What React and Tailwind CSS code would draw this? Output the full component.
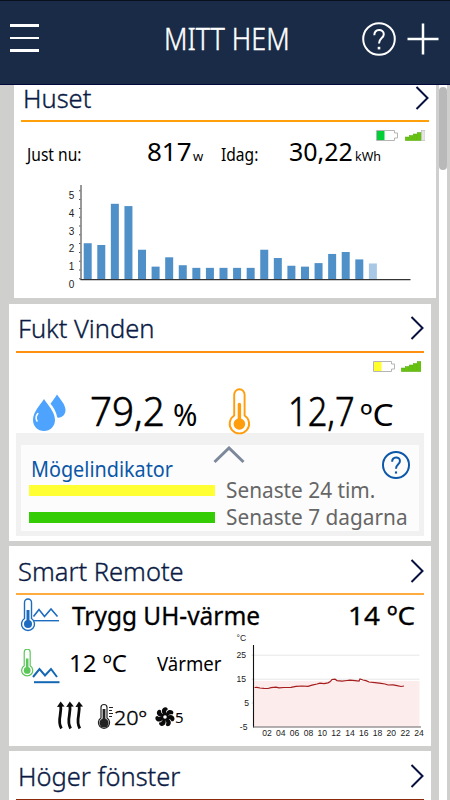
import { clsx } from "clsx";

const FONT = "font-['Noto_Sans','Open_Sans',sans-serif]";

// kWh per hour, the last one is still running
const HOURS = [2.05, 1.95, 4.29, 4.16, 1.68, 0.72, 1.25, 0.8, 0.65, 0.65, 0.65, 0.65, 0.65, 1.68, 1.21, 0.77, 0.72, 0.92, 1.44, 1.55, 1.13, 0.9];

const TEMP_LINE =
  "254.5,687.5 257,687.3 260,688 264,688.3 268,688.5 271,687.6 276,687.2 279,687.9 284,687.5 291,687.3 296,686.4 302,686 308,686.3 312,685.2 317,684 320,683.2 324,683.6 328,682.9 330,681.8 332,679.5 335,679.2 337,680.6 342,681.2 347,680.5 350,680.1 355,680.6 359,681 360,679 363,680 366,680.6 369,682 375,682.7 381,683.4 385,684 388,685 393,684.9 397,685.6 401,686.5 404,686";

function Chevron() {
  return (
    <svg viewBox="0 0 14 24" className="h-6 w-3.5 shrink-0" fill="none" stroke="#07103f" strokeWidth="2">
      <path d="M1.5 1 L12.5 12 L1.5 23" />
    </svg>
  );
}

function Help({ className, thin }) {
  return (
    <svg viewBox="0 0 34 34" className={clsx("shrink-0", className)} fill="none" stroke="currentColor" strokeWidth={thin ? 2 : 2.4}>
      <circle cx="17" cy="17" r="15.8" />
      <path d="M12.3 13.2 C12.3 6.2 21.8 6.4 21.8 12.2 C21.8 16.2 17 16 17 21.5" />
      <path d="M17 24.8 V27.4" strokeWidth="2.6" />
    </svg>
  );
}

function Battery({ color }) {
  return (
    <svg viewBox="0 0 22 11" className="h-[11px] w-[22px] shrink-0">
      <path d="M.5 .5 H18.5 V3 H21.5 V8 H18.5 V10.5 H.5 Z" fill="#fff" stroke="#b5b5b5" />
      <rect x="1" y="1" width="7.5" height="9" fill={color} />
    </svg>
  );
}

function Signal({ level }) {
  return (
    <svg viewBox="0 0 20 11" className="h-[11px] w-5 shrink-0">
      {[4, 5.5, 7, 8.5, 10.5].map((h, i) => (
        <rect key={h} x={i * 4 + 0.3} y={11 - h} width="3.8" height={h - 0.4} fill={i < level ? "#66c40b" : "#e4e4e4"} stroke={i < level ? "#5aa81a" : "#aaa"} strokeWidth=".5" />
      ))}
    </svg>
  );
}

function Card({ title, titleClass = "leading-[34px]", line, className, children }) {
  return (
    <section className={clsx("w-[422px] shrink-0 bg-white px-[7px]", className)}>
      <div className="flex items-center justify-between pl-0.5">
        <h2 className={clsx("text-[25.5px] whitespace-nowrap text-[#0b1b45] font-[350] [-webkit-text-stroke:0.35px]", titleClass)}>{title}</h2>
        <Chevron />
      </div>
      <div className={line} />
      {children}
    </section>
  );
}

function PowerChart() {
  return (
    <svg viewBox="64 184 352 108" className="mt-[18px] ml-[43px] h-[108px] w-[352px]">
      {HOURS.map((v, i) => (
        <rect key={i} x={83.7 + i * 13.58} y={279.3 - v * 17.6} width="8" height={v * 17.6} fill={i === 21 ? "#a9c8e5" : "#4f90c9"} />
      ))}
      <path d="M81 185 V280" stroke="#555" strokeWidth="1.2" />
      <path d="M80.5 279.6 H410.5" stroke="#333" strokeWidth="1.2" />
      <path d="M79.7 279.3 V190" stroke="#444" strokeWidth="1.2" strokeDasharray="1 7.8" />
      <g className="font-['Liberation_Sans',sans-serif] text-[10px]" fill="#222" textAnchor="middle">
        {[5, 4, 3, 2, 1, 0].map((n, i) => (
          <text key={n} x="71.6" y={199 + i * 17.75}>{n}</text>
        ))}
      </g>
    </svg>
  );
}

function TempChart() {
  return (
    <svg viewBox="230 632 194 108" className="-mt-px h-[108px] w-[194px] shrink-0">
      <rect x="254" y="681" width="165.5" height="46" fill="#fdecec" />
      <path d="M254 655.2 H419.5 M254 679.2 H419.5" stroke="#e6e6e6" />
      <path d="M254 703 H251.5 M254 679.2 H251.5 M254 655.2 H251.5" stroke="#ddd" />
      <path d="M253.5 645 V727.5" stroke="#111" strokeWidth="1.1" />
      <path d="M253 727 H421" stroke="#666" />
      <polyline points={TEMP_LINE} fill="none" stroke="#a51d1d" strokeWidth="1.2" />
      <g className="font-['Liberation_Sans',sans-serif] text-[8.6px]" fill="#222">
        <text x="236.5" y="641">°C</text>
        <text x="246" y="658.3" textAnchor="end">25</text>
        <text x="246" y="682.3" textAnchor="end">15</text>
        <text x="249" y="706.2" textAnchor="end">5</text>
        <text x="247.5" y="730" textAnchor="end">-5</text>
        {["02", "04", "06", "08", "10", "12", "14", "16", "18", "20", "22", "24"].map((h, i) => (
          <text key={h} x={267 + i * 13.82} y="735.5" textAnchor="middle">{h}</text>
        ))}
      </g>
    </svg>
  );
}

function Drops() {
  return (
    <svg viewBox="32 393 35 38" className="h-[38px] w-[35px] shrink-0" fill="#4da3fd">
      <path d="M57 393.5 C60 398 65.5 403.5 65.5 409 C65.5 413.5 62 417.3 57.3 416.6 C56.3 411 53.5 406 50.5 402.8 C53 399.5 55.5 396 57 393.5 Z" />
      <path d="M44 398 C47.5 403.5 55 411 55 419 C55 425.5 50 430 44 430 C38 430 33 425.5 33 419 C33 411 40.5 403.5 44 398 Z" />
      <path d="M37.8 412.5 C35.8 415 35.8 418 37 420" fill="none" stroke="#fff" strokeWidth="1.6" strokeLinecap="round" />
    </svg>
  );
}

function Thermometer() {
  return (
    <svg viewBox="228 387 23 47" className="relative z-10 h-[47px] w-[23px] shrink-0" fill="none" stroke="#ff9d0c" strokeWidth="1.9">
      <path d="M234.2 414.5 V393.5 A5.2 5.2 0 0 1 244.6 393.5 V414.5 A9.7 9.7 0 1 1 234.2 414.5 Z" fill="#fff" />
      <path d="M239.4 403.5 V420" strokeWidth="3.4" strokeLinecap="round" />
      <circle cx="239.4" cy="423" r="5.8" fill="#ff9d0c" stroke="none" />
    </svg>
  );
}

// indoor = wave level with the bulb, outdoor = wave below it
function TempIcon({ low }) {
  const c = low ? "#5cc65a" : "#1d6cc0";
  return (
    <svg viewBox="20 598 41 38" className="h-[38px] w-[41px] shrink-0" fill="none">
      <g stroke={c} strokeWidth="1.4" transform={low ? "translate(3.4 89) scale(.85)" : undefined}>
        <path d="M24.5 618.5 V602.5 A3.5 3.5 0 0 1 31.5 602.5 V618.5 A6.5 6.5 0 1 1 24.5 618.5 Z" />
        <path d="M28 610 V622" strokeWidth="3" />
        <circle cx="28" cy="624" r="4" fill={c} stroke="none" />
      </g>
      {low ? (
        <g stroke="#1467b3">
          <path d="M33 626 L39.5 618 L45 624.5 L51 618 L57 626" strokeWidth="2" />
          <path d="M34 631.2 H59.5" strokeWidth="2" />
        </g>
      ) : (
        <g stroke="#1d6cc0" strokeWidth="1.6">
          <path d="M33.5 616.5 L39 609.5 L44.5 616.5 L51 609 L57.5 616.5" />
          <path d="M34 620.7 H59" strokeWidth="1.4" />
        </g>
      )}
    </svg>
  );
}

function HeatWaves() {
  return (
    <svg viewBox="56 700 28 30" className="h-[30px] w-7 shrink-0" fill="none" stroke="#0a0a0a" strokeWidth="2.8">
      {[0, 9.2, 18.4].map((x) => (
        <g key={x} transform={`translate(${x} 0)`}>
          <path d="M61.4 728.5 C56.5 720 62.4 714 60.6 705" />
          <path d="M57 707 L60.6 701.5 L64.6 706.5 Z" fill="#0a0a0a" stroke="none" />
        </g>
      ))}
    </svg>
  );
}

function SmallThermometer() {
  return (
    <svg viewBox="97 703 17 27" className="h-[27px] w-[17px] shrink-0" fill="none" stroke="#222" strokeWidth="1.2">
      <path d="M101 718 V707.5 A3 3 0 0 1 107 707.5 V718 A5.6 5.6 0 1 1 101 718 Z" />
      <path d="M104 709 V720" strokeWidth="2.8" />
      <circle cx="104" cy="723" r="4.6" fill="#222" stroke="none" />
      <path d="M109 707.5 H113 M109 710.5 H112 M109 713.5 H113 M109 716.5 H112" />
    </svg>
  );
}

function Fan() {
  return (
    <svg viewBox="0 0 20 20" className="h-5 w-5 shrink-0" fill="#0a0a0a">
      {[0, 51.4, 102.8, 154.3, 205.7, 257.1, 308.6].map((a) => (
        <path key={a} transform={`rotate(${a} 10 10)`} d="M8.6 7.6 C6 5.8 6.2 1.4 9.4 .4 C11.6 -.1 13 1.2 12.6 2.8 C10.8 3.8 10.8 5.4 11.2 7.6 Z" />
      ))}
      <circle cx="10" cy="10" r="3.6" />
      <circle cx="10" cy="10" r="1.8" fill="#fff" />
    </svg>
  );
}

function MouldRow({ color, children }) {
  return (
    <div className="flex h-[27px] items-center">
      <div className={clsx("h-[11px] w-[186px] shrink-0", color)} />
      <div className="-mt-[2px] ml-[11px] w-[181px] origin-left scale-x-[0.967] text-[21.5px] leading-[27px] whitespace-nowrap text-[#666]">{children}</div>
    </div>
  );
}

export default function App() {
  return (
    <div className={clsx("flex h-[800px] w-[450px] flex-col overflow-hidden bg-[#cfd0ce]", FONT)}>
      <header className="flex h-[85px] shrink-0 items-start border-t border-b border-t-[#080f1d] border-b-[#03083a] bg-[#192b47] text-white">
        <div className="mt-[23px] ml-2.5 flex w-[29px] flex-col gap-2.5">
          <div className="h-[2.5px] bg-white" />
          <div className="h-[2.5px] bg-white" />
          <div className="h-[2.5px] bg-white" />
        </div>
        <h1 className="mt-[16px] ml-[125px] w-[198px] origin-left scale-x-[0.84] text-[32px] leading-[42px] font-light whitespace-nowrap [-webkit-text-stroke:0.5px]">MITT HEM</h1>
        <Help className="mt-[20.5px] h-[34px] w-[34px]" thin />
        <svg viewBox="0 0 32 32" className="mt-[21.5px] ml-[11px] h-8 w-8 shrink-0" stroke="#fff" strokeWidth="2.5">
          <path d="M16 .5 V31.5 M.5 16 H31.5" />
        </svg>
      </header>

      <div className="flex min-h-0 flex-1">
        <main className="flex w-[439px] shrink-0 flex-col overflow-hidden pl-[9px]">
          <Card title="Huset" titleClass="leading-[26px]" line="mt-[9px] h-[2px] bg-[#ffa00a]" className="ml-[5px] h-[213px]">
            <div className="mt-2 flex justify-end gap-[7px] pr-1">
              <Battery color="#00cf35" />
              <Signal level={4} />
            </div>
            <div className="flex items-baseline pl-[6px] leading-5 whitespace-nowrap text-black">
              <span className="w-[120px] origin-left scale-x-[0.89] text-[17.5px]">Just nu:</span>
              <span className="w-[46px] text-[26px]">817</span>
              <span className="w-[28px] text-[13px]">w</span>
              <span className="w-[68px] origin-left scale-x-[0.89] text-[17.5px]">Idag:</span>
              <span className="w-[66px] origin-left scale-x-[0.96] text-[26px]">30,22</span>
              <span className="origin-left scale-x-[0.96] text-[13px]">kWh</span>
            </div>
            <PowerChart />
          </Card>

          <Card title="Fukt Vinden" line="mt-[6px] h-[1.5px] bg-[#ff9010]" className="mt-[5.5px] h-[237px] pt-[7.5px]">
            <div className="mt-2 flex justify-end gap-[6px] pr-[3px]">
              <Battery color="#ffff2a" />
              <Signal level={5} />
            </div>
            <div className="mt-4 flex h-[45px] items-start whitespace-nowrap text-black">
              <div className="mt-[6px] ml-4"><Drops /></div>
              <div className="ml-[23px] flex w-[138px] items-baseline leading-[45px]">
                <span className="w-[83px] origin-left scale-x-[0.94] text-[41px] font-[350] [-webkit-text-stroke:0.6px]">79,2</span>
                <span className="origin-left scale-x-[0.98] text-[30px]">%</span>
              </div>
              <Thermometer />
              <div className="ml-[37px] flex items-baseline leading-[45px]">
                <span className="w-[72px] origin-left scale-x-[0.84] text-[41px] font-[350] [-webkit-text-stroke:0.6px]">12,7</span>
                <span className="origin-left scale-x-[1.08] text-[31px]">ºC</span>
              </div>
            </div>
            <div className="h-[103px] bg-[#f1f1f1] px-[5px] pt-3 pb-[5px]">
              <div className="h-[86px] bg-[#fcfcfc] pl-2">
                <div className="flex h-[32px] items-start">
                  <div className="mt-[8px] ml-[2px] w-[182px] origin-left scale-x-[0.9] text-[22px] leading-[30px] whitespace-nowrap text-[#0b57a8]">Mögelindikator</div>
                  <svg viewBox="0 0 32 18" className="mt-px h-[18px] w-8" fill="none" stroke="#7d899b" strokeWidth="3">
                    <path d="M1.5 16 L16 2 L30.5 16" />
                  </svg>
                  <Help className="mt-[6px] ml-[137px] h-7 w-7 text-[#0b57a8]" />
                </div>
                <MouldRow color="bg-[#ffff33]">Senaste 24 tim.</MouldRow>
                <MouldRow color="bg-[#33cc05]">Senaste 7 dagarna</MouldRow>
              </div>
            </div>
          </Card>

          <Card title="Smart Remote" line="mt-[5px] h-[2px] bg-[#ffab3d]" className="mt-[5.5px] h-[200px] pt-[8px]">
            <div className="flex h-[38px] items-start pt-[3px] pl-1 whitespace-nowrap text-black">
              <TempIcon />
              <span className="-mt-px ml-[11px] w-[276px] origin-left scale-x-[0.94] text-[26px] leading-[36px] [-webkit-text-stroke:0.3px]">Trygg UH-värme</span>
              <span className="-mt-px origin-left scale-x-[1.07] text-[26px] leading-[36px] [-webkit-text-stroke:0.3px]">14 ºC</span>
            </div>
            <div className="flex">
              <div className="w-[214px] shrink-0 text-black">
                <div className="mt-4 flex h-[38px] items-start pl-1 whitespace-nowrap">
                  <TempIcon low />
                  <span className="ml-[8px] w-[88px] text-[24px] leading-[28px]">12 ºC</span>
                  <span className="origin-left scale-x-[0.93] text-[20px] leading-[30px]">Värmer</span>
                </div>
                <div className="mt-[13px] flex items-center pl-10">
                  <HeatWaves />
                  <div className="mt-[3px] ml-[13px]"><SmallThermometer /></div>
                  <span className="mt-[5px] w-[41px] origin-left scale-x-[1.08] text-[20px] leading-[24px] font-light [-webkit-text-stroke:0.4px]">20º</span>
                  <div className="mt-[3px]"><Fan /></div>
                  <span className="mt-[4px] text-[15px] leading-[24px]">5</span>
                </div>
              </div>
              <TempChart />
            </div>
          </Card>

          <Card title="Höger fönster" line="mt-[6px] h-[2px] bg-[#8a2a08]" className="mt-[5px] h-[60px] pt-[7.5px]" />
        </main>
        <div className="w-2 bg-white pt-0.5">
          <div className="h-[83px] rounded-full bg-[#b9b9b9]" />
        </div>
      </div>
    </div>
  );
}
